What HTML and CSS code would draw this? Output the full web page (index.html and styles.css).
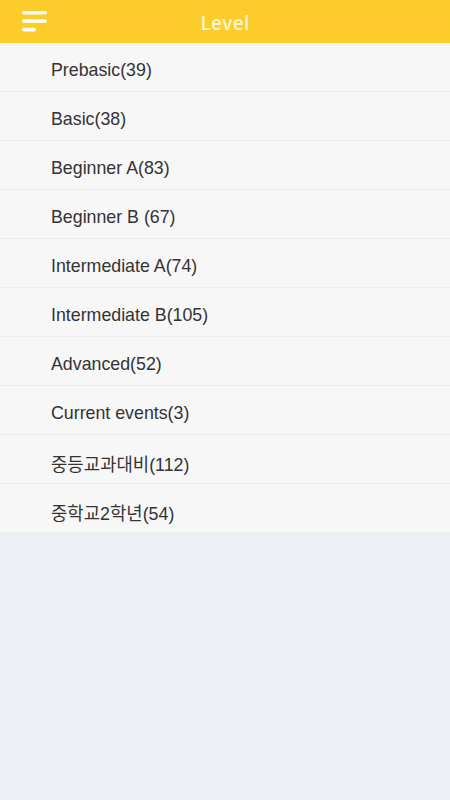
FILE: index.html
```html
<!DOCTYPE html>
<html lang="ko">
<head>
    <meta charset="UTF-8">
    <meta name="viewport" content="width=device-width, initial-scale=1.0">
    <title>Level</title>
    <link rel="stylesheet" href="styles.css">
</head>
<body>
    <header class="top-bar">
        <button class="menu-btn" aria-label="menu">
            <svg width="26" height="22" viewBox="0 0 26 22">
                <rect x="0" y="0" width="25" height="3.6" rx="1.8" fill="#fff"/>
                <rect x="0" y="8.2" width="25" height="3.6" rx="1.8" fill="#fff"/>
                <rect x="0" y="16.8" width="14" height="3.6" rx="1.8" fill="#fff"/>
            </svg>
        </button>
        <h1 class="title">Level</h1>
    </header>

    <ul class="level-list">
        <li>Prebasic(39)</li>
        <li>Basic(38)</li>
        <li>Beginner A(83)</li>
        <li>Beginner B (67)</li>
        <li>Intermediate A(74)</li>
        <li>Intermediate B(105)</li>
        <li>Advanced(52)</li>
        <li>Current events(3)</li>
        <li>중등교과대비(112)</li>
        <li>중학교2학년(54)</li>
    </ul>
</body>
</html>
```

FILE: styles.css
```css
body {
    margin: 0;
    background-color: #edeff7;
    font-family: "Liberation Sans", Arial, "Noto Sans CJK KR", sans-serif;
}

.top-bar {
    position: relative;
    height: 43px;
    background-color: #fccc2b;
    display: flex;
    align-items: center;
    justify-content: center;
}

.menu-btn {
    position: absolute;
    left: 22px;
    top: 11px;
    padding: 0;
    border: none;
    background: none;
    line-height: 0;
}

.title {
    margin: 0;
    padding-top: 3px;
    font-family: "Open Sans", sans-serif;
    font-size: 19px;
    font-weight: 600;
    color: #fff5d2;
    letter-spacing: 0.3px;
}

.level-list {
    list-style: none;
    margin: 0;
    padding: 0;
    background-color: #f7f7f7;
}

.level-list li {
    height: 41px;
    padding: 7px 0 0 51px;
    display: flex;
    align-items: center;
    font-size: 17.8px;
    color: #333;
    border-bottom: 1px solid #ececef;
}
```
